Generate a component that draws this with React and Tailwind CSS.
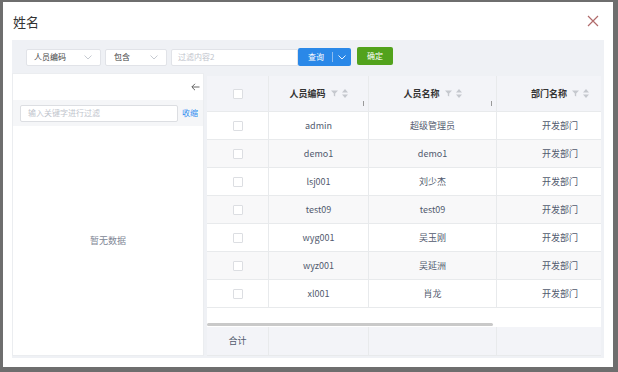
import React from "react";

const font = { fontFamily: '"Noto Sans CJK SC", "Noto Sans", sans-serif' };

function Chevron({ className = "" }) {
  return (
    <svg width="8" height="5" viewBox="0 0 8 5" className={className}>
      <path d="M0.5 0.5 L4 4 L7.5 0.5" fill="none" stroke="currentColor" strokeWidth="0.9" />
    </svg>
  );
}

function HeaderIcons() {
  return (
    <span className="flex items-center gap-[4px] ml-[5px] text-[#c5c8ce]">
      <svg width="7" height="7" viewBox="0 0 7 7">
        <path d="M0 0.5 H7 L4.2 3.6 V6.5 L2.8 5.8 V3.6 Z" fill="currentColor" />
      </svg>
      <svg width="6" height="9" viewBox="0 0 6 9">
        <path d="M3 0 L6 3.5 H0 Z M3 9 L0 5.5 H6 Z" fill="currentColor" />
      </svg>
    </span>
  );
}

function Check() {
  return <span className="block w-[10px] h-[10px] border border-[#dcdee2] bg-white rounded-[1px]" />;
}

const rows = [
  ["admin", "超级管理员"],
  ["demo1", "demo1"],
  ["lsj001", "刘少杰"],
  ["test09", "test09"],
  ["wyg001", "吴玉刚"],
  ["wyz001", "吴延洲"],
  ["xl001", "肖龙"],
];

export default function App() {
  return (
    <div className="w-[618px] h-[372px] bg-[#6e6e6e] pt-[2px] pl-[3px] overflow-hidden" style={font}>
      <div className="w-[610px] h-[365px] bg-white flex flex-col">
        {/* title bar */}
        <div className="h-[38px] flex items-center justify-between pl-[10px] pr-[14px]">
          <span className="text-[13px] text-[#333] leading-none">姓名</span>
          <svg width="12" height="12" viewBox="0 0 12 12">
            <path d="M1 1 L11 11 M11 1 L1 11" stroke="#b06a6a" strokeWidth="1.2" fill="none" />
          </svg>
        </div>
        {/* body */}
        <div className="ml-[9px] w-[592px] h-[318px] bg-[#eff1f5] flex flex-col">
          {/* filter row */}
          <div className="h-[34px] flex items-center pl-[14px] text-[8px]">
            <div className="w-[75px] h-[17px] bg-white border border-[#e1e3e8] rounded-[2px] flex items-center justify-between pl-[7px] pr-[8px] text-[#444]">
              <span>人员编码</span>
              <Chevron className="text-[#c0c4cc]" />
            </div>
            <div className="ml-[4px] w-[62px] h-[17px] bg-white border border-[#e1e3e8] rounded-[2px] flex items-center justify-between pl-[8px] pr-[8px] text-[#444]">
              <span>包含</span>
              <Chevron className="text-[#c0c4cc]" />
            </div>
            <div className="ml-[4px] w-[127px] h-[17px] bg-white border border-[#e1e3e8] rounded-l-[2px] flex items-center pl-[6px] text-[#c0c4cc]">
              过滤内容2
            </div>
            <div className="w-[53px] h-[18px] bg-[#2a88e8] rounded-[2px] flex items-center text-white">
              <span className="pl-[10px] pr-[8px]">查询</span>
              <span className="w-px h-[10px] bg-[#8cbcf0]" />
              <Chevron className="ml-[5px] text-white" />
            </div>
            <div className="ml-[6px] -mt-[2px] w-[36px] h-[18px] bg-[#52a21c] rounded-[2px] flex items-center justify-center text-white">
              确定
            </div>
          </div>
          {/* content */}
          <div className="flex flex-1">
            {/* left panel */}
            <div className="w-[192px] h-[283px] bg-white border border-[#ebedf0] flex flex-col mt-[-1px]">
              <div className="h-[26px] flex items-center justify-end pr-[3px]">
                <svg width="9" height="8" viewBox="0 0 9 8">
                  <path d="M8.5 4 H1 M4 0.8 L0.8 4 L4 7.2" stroke="#555" strokeWidth="0.9" fill="none" />
                </svg>
              </div>
              <div className="h-[26px] bg-[#f5f6f8] flex items-center pl-[7px]">
                <div className="w-[158px] h-[17px] bg-white border border-[#dcdee2] rounded-[2px] flex items-center pl-[7px] text-[8px] text-[#c0c4cc]">
                  输入关键字进行过滤
                </div>
                <span className="ml-[4px] text-[8px] text-[#2d8cf0]">收缩</span>
              </div>
              <div className="flex-1 flex items-center justify-center text-[9px] text-[#808695]">
                暂无数据
              </div>
            </div>
            {/* table */}
            <div className="ml-[3px] mt-[2px] w-[394px] h-[280px] overflow-hidden flex flex-col bg-white text-[9px] text-[#515a6e]">
              <div className="w-[416px] h-[36px] flex bg-[#f3f4f8] border-b border-[#e8eaec] font-semibold text-[#333] shrink-0">
                <div className="w-[62px] flex items-center justify-center border-r border-[#e8eaec]">
                  <Check />
                </div>
                <div className="w-[100px] relative flex items-center justify-center border-r border-[#e8eaec]">
                  <span>人员编码</span>
                  <HeaderIcons />
                  <span className="absolute right-[4px] bottom-[5px] w-px h-[5px] bg-[#999]" />
                </div>
                <div className="w-[128px] relative flex items-center justify-center border-r border-[#e8eaec]">
                  <span>人员名称</span>
                  <HeaderIcons />
                  <span className="absolute right-[4px] bottom-[5px] w-px h-[5px] bg-[#999]" />
                </div>
                <div className="w-[126px] flex items-center justify-center">
                  <span>部门名称</span>
                  <HeaderIcons />
                </div>
              </div>
              {rows.map((r, i) => (
                <div
                  key={r[0]}
                  className={`w-[416px] h-[28px] flex border-b border-[#e8eaec] shrink-0 ${i % 2 === 1 ? "bg-[#f8f8f9]" : "bg-white"}`}
                >
                  <div className="w-[62px] flex items-center justify-center border-r border-[#e8eaec]">
                    <Check />
                  </div>
                  <div className="w-[100px] flex items-center justify-center border-r border-[#e8eaec]">{r[0]}</div>
                  <div className="w-[128px] flex items-center justify-center border-r border-[#e8eaec]">{r[1]}</div>
                  <div className="w-[126px] flex items-center justify-center">开发部门</div>
                </div>
              ))}
              <div className="flex-1 flex items-end pb-[1px]">
                <div className="w-[286px] h-[3px] rounded-full bg-[#c9c9c9]" />
              </div>
              <div className="w-[416px] h-[29px] flex bg-[#f3f4f8] shrink-0 border-b border-[#e8eaec]">
                <div className="w-[62px] flex items-center justify-center border-r border-[#e8eaec]">合计</div>
                <div className="w-[100px] border-r border-[#e8eaec]" />
                <div className="w-[128px] border-r border-[#e8eaec]" />
                <div className="w-[126px]" />
              </div>
            </div>
          </div>
        </div>
      </div>
    </div>
  );
}
